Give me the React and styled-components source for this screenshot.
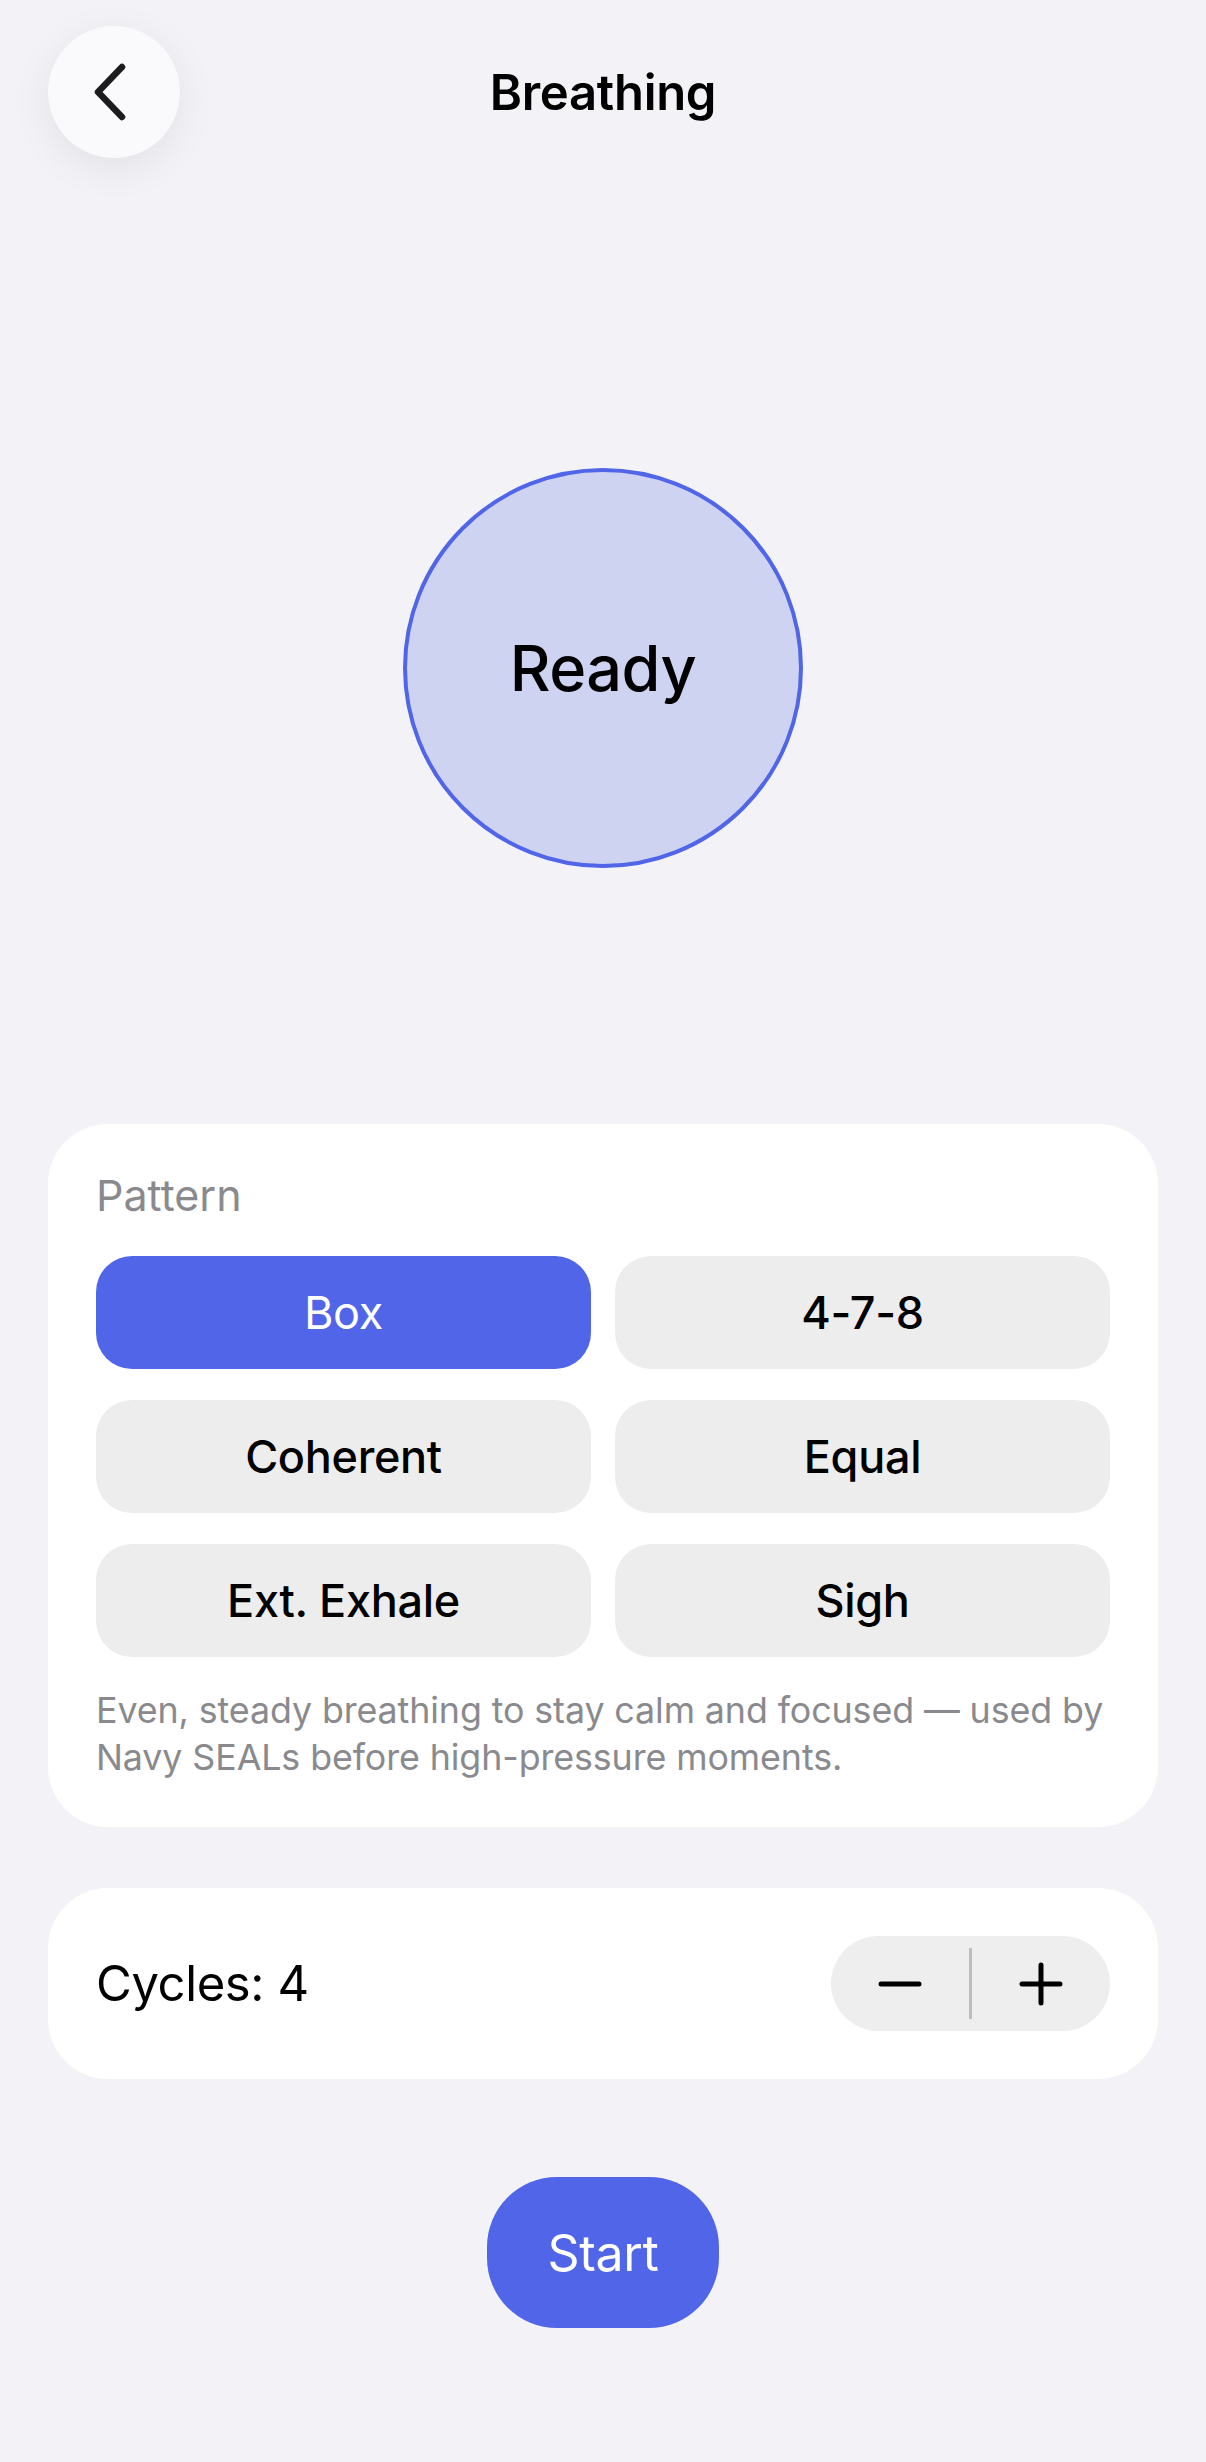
import React, { useState } from "react";
import styled, { createGlobalStyle } from "styled-components";

const Global = createGlobalStyle`
  html, body { margin: 0; padding: 0; background: #F2F2F7; }
  body { font-family: Inter, "Noto Sans", "Liberation Sans", sans-serif; -webkit-font-smoothing: antialiased; }
  * { box-sizing: border-box; }
`;

const Screen = styled.div`
  width: 1206px;
  min-height: 2462px;
  background: #F2F2F7;
  display: flex;
  flex-direction: column;
`;

const Header = styled.header`
  display: grid;
  grid-template-columns: 1fr auto 1fr;
  align-items: center;
  padding: 26px 48px 0;
  height: 158px;
`;

const BackButton = styled.button`
  width: 132px;
  height: 132px;
  border-radius: 50%;
  border: none;
  background: #FAFAFD;
  box-shadow: 0 10px 40px rgba(0, 0, 0, 0.07);
  display: flex;
  align-items: center;
  justify-content: center;
  padding: 0 8px 0 0;
  justify-self: start;
`;

const Title = styled.h1`
  margin: 0;
  font-size: 49px;
  font-weight: 600;
  color: #000;
  letter-spacing: -0.3px;
`;

const Hero = styled.section`
  display: flex;
  justify-content: center;
  padding: 310px 0 256px;
`;

const Orb = styled.div`
  width: 400px;
  height: 400px;
  border-radius: 50%;
  background: #CFD3F2;
  border: 4.5px solid #5065E8;
  display: flex;
  align-items: center;
  justify-content: center;
  font-size: 63px;
  font-weight: 500;
  color: #000;
  letter-spacing: -0.5px;
`;

const Card = styled.section`
  margin: 0 48px;
  background: #fff;
  border-radius: 60px;
  padding: ${(p) => p.$pad};
`;

const Label = styled.div`
  font-size: 43px;
  color: #8A8A8E;
  line-height: 54px;
  margin-bottom: 34px;
`;

const Grid = styled.div`
  display: grid;
  grid-template-columns: 1fr 1fr;
  column-gap: 24px;
  row-gap: 31px;
`;

const PatternButton = styled.button`
  height: 113px;
  border: none;
  border-radius: 36px;
  background: ${(p) => (p.$active ? "#5065E8" : "#EDEDEE")};
  color: ${(p) => (p.$active ? "#fff" : "#000")};
  font-family: inherit;
  font-size: 45px;
  font-weight: ${(p) => (p.$active ? 400 : 500)};
  letter-spacing: -0.3px;
`;

const Description = styled.p`
  margin: 30px 0 0;
  font-size: 35.8px;
  line-height: 47px;
  color: #8A8A8E;
  letter-spacing: -0.1px;
`;

const Row = styled.div`
  display: flex;
  align-items: center;
  justify-content: space-between;
`;

const CyclesText = styled.span`
  font-size: 49px;
  color: #000;
  letter-spacing: -0.4px;
`;

const Stepper = styled.div`
  width: 279px;
  height: 95px;
  border-radius: 48px;
  background: #EEEEEF;
  display: flex;
  align-items: center;
`;

const StepButton = styled.button`
  flex: 1;
  height: 100%;
  border: none;
  background: transparent;
  display: flex;
  align-items: center;
  justify-content: center;
  padding: 0;
`;

const Divider = styled.div`
  width: 2.5px;
  height: 71px;
  background: #BEBEC0;
`;

const Footer = styled.div`
  display: flex;
  justify-content: center;
  padding-top: 98px;
`;

const StartButton = styled.button`
  width: 232px;
  height: 151px;
  border: none;
  border-radius: 70px;
  background: #5065E8;
  color: #fff;
  font-family: inherit;
  font-size: 50px;
  font-weight: 400;
  letter-spacing: -0.3px;
`;

const Gap = styled.div`
  height: ${(p) => p.$h}px;
`;

const patterns = ["Box", "4-7-8", "Coherent", "Equal", "Ext. Exhale", "Sigh"];

export default function App() {
  const [active, setActive] = useState("Box");
  const [cycles, setCycles] = useState(4);
  return (
    <Screen>
      <Global />
      <Header>
        <BackButton aria-label="Back">
          <svg width="40" height="60" viewBox="0 0 40 60" fill="none">
            <path d="M32 5 L8 30 L32 55" stroke="#1C1C1E" strokeWidth="6.5" strokeLinecap="round" strokeLinejoin="round" />
          </svg>
        </BackButton>
        <Title>Breathing</Title>
        <div />
      </Header>
      <Hero>
        <Orb>Ready</Orb>
      </Hero>
      <Card $pad="44px 48px 46px">
        <Label>Pattern</Label>
        <Grid>
          {patterns.map((p) => (
            <PatternButton key={p} $active={p === active} onClick={() => setActive(p)}>
              {p}
            </PatternButton>
          ))}
        </Grid>
        <Description>
          Even, steady breathing to stay calm and focused — used by Navy SEALs before high-pressure moments.
        </Description>
      </Card>
      <Gap $h={61} />
      <Card $pad="48px 48px 48px">
        <Row>
          <CyclesText>Cycles: {cycles}</CyclesText>
          <Stepper>
            <StepButton aria-label="Decrease" onClick={() => setCycles((c) => Math.max(1, c - 1))}>
              <svg width="44" height="44" viewBox="0 0 44 44">
                <path d="M3 22 H41" stroke="#000" strokeWidth="5" strokeLinecap="round" />
              </svg>
            </StepButton>
            <Divider />
            <StepButton aria-label="Increase" onClick={() => setCycles((c) => c + 1)}>
              <svg width="44" height="44" viewBox="0 0 44 44">
                <path d="M3 22 H41 M22 3 V41" stroke="#000" strokeWidth="5" strokeLinecap="round" />
              </svg>
            </StepButton>
          </Stepper>
        </Row>
      </Card>
      <Footer>
        <StartButton>Start</StartButton>
      </Footer>
    </Screen>
  );
}
